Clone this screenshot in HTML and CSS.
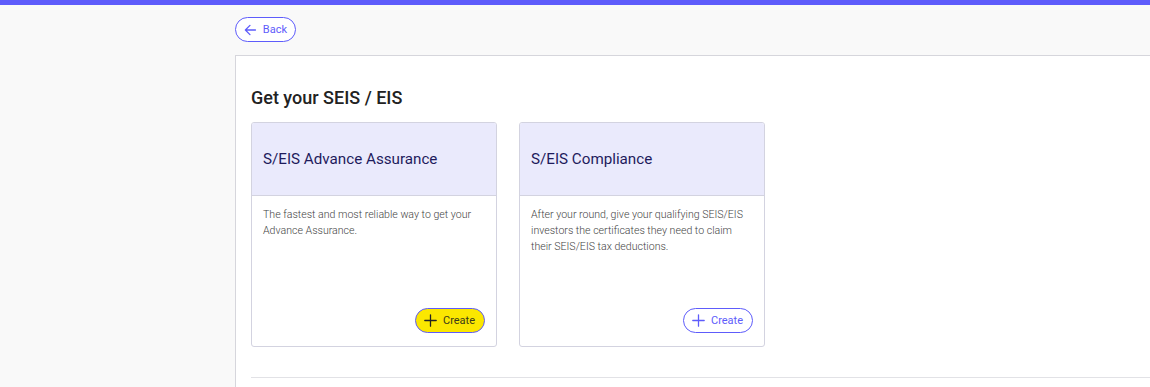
FILE: index.html
```html
<!DOCTYPE html>
<html>
  <head>
    <meta charset="UTF-8" />
    <meta name="viewport" content="width=device-width, initial-scale=1">
    <title>Get your SEIS / EIS</title>
    <link rel="stylesheet" href="styles.css">
  </head>
  <body>
    <div class="topbar"></div>

    <div class="mainpage">
      <a href="#" class="btn btn-back">
        <svg width="14" height="14" viewBox="0 0 14 14" fill="none" stroke="currentColor" stroke-width="1.4" stroke-linecap="round" stroke-linejoin="round">
          <path d="M12.5 7H1.5M6.5 2L1.5 7L6.5 12"/>
        </svg>
        Back
      </a>

      <div class="panel">
        <h2 class="title">Get your SEIS / EIS</h2>

        <div class="cards">
          <div class="card">
            <div class="card-head">S/EIS Advance Assurance</div>
            <div class="card-body">
              <p>The fastest and most reliable way to get your Advance Assurance.</p>
              <a href="#" class="btn btn-create active">
                <svg width="13" height="13" viewBox="0 0 13 13" fill="none" stroke="currentColor" stroke-width="1.3" stroke-linecap="round">
                  <path d="M6.5 0.8V12.2M0.8 6.5H12.2"/>
                </svg>
                Create
              </a>
            </div>
          </div>

          <div class="card">
            <div class="card-head">S/EIS Compliance</div>
            <div class="card-body">
              <p>After your round, give your qualifying SEIS/EIS investors the certificates they need to claim their SEIS/EIS tax deductions.</p>
              <a href="#" class="btn btn-create">
                <svg width="13" height="13" viewBox="0 0 13 13" fill="none" stroke="currentColor" stroke-width="1.3" stroke-linecap="round">
                  <path d="M6.5 0.8V12.2M0.8 6.5H12.2"/>
                </svg>
                Create
              </a>
            </div>
          </div>
        </div>

        <div class="divider"></div>
      </div>
    </div>
  </body>
</html>
```

FILE: styles.css
```css
*{
    box-sizing: border-box;
}

body{
    margin: 0;
    background-color: #f9f9f9;
    font-family: Roboto, "Liberation Sans", sans-serif;
    height: 100vh;
    overflow: hidden;
}

.topbar{
    height: 5px;
    background-color: #5e5cfb;
}

.mainpage{
    padding: 12px 0 0 235px;
}

.btn{
    display: inline-flex;
    align-items: center;
    gap: 6px;
    height: 25px;
    border: 1px solid #5e5cfb;
    border-radius: 13px;
    color: #5e5cfb;
    font-size: 11px;
    text-decoration: none;
    background-color: white;
}

.btn-back{
    width: 61px;
    padding: 0 8px;
}

.panel{
    margin-top: 13px;
    background-color: white;
    border: 1px solid #d6d6dc;
    border-right: none;
    border-bottom: none;
    padding: 30px 0 0 15px;
    height: 332px;
}

.title{
    margin: 0 0 12px;
    font-size: 18px;
    font-weight: 500;
    color: #222;
    line-height: 24px;
}

.cards{
    display: flex;
    gap: 22px;
}

.card{
    width: 246px;
    height: 225px;
    border: 1px solid #d3d3e0;
    border-radius: 3px;
    display: flex;
    flex-direction: column;
    overflow: hidden;
}

.card-head{
    height: 73px;
    background-color: #eaeafc;
    border-bottom: 1px solid #d3d3e0;
    padding: 0 11px;
    display: flex;
    align-items: center;
    font-size: 15.2px;
    color: #1e1b5c;
}

.card-body{
    flex: 1;
    padding: 11px 11px 13px;
    display: flex;
    flex-direction: column;
    align-items: flex-start;
}

.card-body p{
    margin: 0;
    flex: 1;
    font-size: 10.6px;
    font-weight: 300;
    line-height: 16px;
    color: #444;
}

.btn-create{
    align-self: flex-end;
    width: 70px;
    padding: 0 8px;
    gap: 6px;
}

.btn-create.active{
    background-color: #fbe700;
    color: #3a3a1a;
}

.btn-create.active svg{
    color: #222;
}

.divider{
    margin-top: 30px;
    height: 1px;
    background-color: #e2e2e6;
}
```
